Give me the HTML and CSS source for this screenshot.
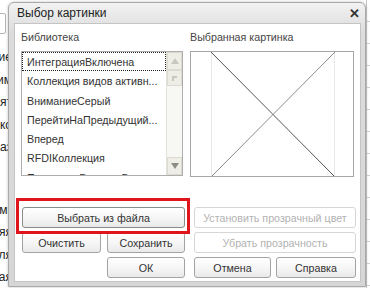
FILE: index.html
```html
<!DOCTYPE html>
<html>
    <head>
        <meta charset="utf-8">
        <title>Выбор картинки</title>
        <link rel="stylesheet" href="styles.css">
    </head>
    <body>
        <div class="desktop">
            <div class="bg-left">
                <div class="bg-field"></div>
                <div class="bg-line">Расширение</div>
                <div class="bg-line">Имя файла: им</div>
                <div class="bg-line">Используемят</div>
                <div class="bg-line">Описание ко</div>
                <div class="bg-line">Вид заказ</div>
                <div class="bg-line gap">Используемг</div>
                <div class="bg-line">Основнаяя</div>
                <div class="bg-line">Дополнителя</div>
                <div class="bg-line">Резервная</div>
            </div>
            <div class="bg-right"></div>

            <div class="dialog">
                <div class="dialog-title">
                    <span>Выбор картинки</span>
                    <span class="close">&#x2715;</span>
                </div>
                <div class="dialog-body">
                    <div class="columns">
                        <div class="col">
                            <div class="label">Библиотека</div>
                            <div class="list">
                                <ul class="items">
                                    <li class="focused">ИнтеграцияВключена</li>
                                    <li>Коллекция видов активн...</li>
                                    <li>ВниманиеСерый</li>
                                    <li>ПерейтиНаПредыдущий...</li>
                                    <li>Вперед</li>
                                    <li>RFDIКоллекция</li>
                                    <li>ПомощникБазовыхВерси</li>
                                </ul>
                                <div class="scrollbar">
                                    <div class="sb-btn"><span class="arrow up"></span></div>
                                    <div class="sb-thumb"><span class="grip"></span></div>
                                    <div class="sb-track"></div>
                                    <div class="sb-btn"><span class="arrow down"></span></div>
                                </div>
                            </div>
                        </div>
                        <div class="col">
                            <div class="label">Выбранная картинка</div>
                            <div class="picture">
                                <svg width="164" height="125" viewBox="0 0 164 125">
                                    <line x1="20.5" y1="0" x2="20.5" y2="125" stroke="#e8e8e8" stroke-width="1"/>
                                    <line x1="143.5" y1="0" x2="143.5" y2="125" stroke="#e8e8e8" stroke-width="1"/>
                                    <line x1="20" y1="0" x2="144" y2="125" stroke="#555" stroke-width="1"/>
                                    <line x1="144" y1="0" x2="20" y2="125" stroke="#8a8a8a" stroke-width="1"/>
                                </svg>
                            </div>
                        </div>
                    </div>

                    <div class="buttons">
                        <div class="btn-group left">
                            <button class="btn wide marked">Выбрать из файла</button>
                            <button class="btn">Очистить</button>
                            <button class="btn">Сохранить</button>
                            <span></span>
                            <button class="btn">ОК</button>
                        </div>
                        <div class="btn-group right">
                            <button class="btn wide" disabled>Установить прозрачный цвет</button>
                            <button class="btn wide" disabled>Убрать прозрачность</button>
                            <button class="btn">Отмена</button>
                            <button class="btn">Справка</button>
                        </div>
                    </div>
                </div>
            </div>
        </div>
    </body>
</html>
```

FILE: styles.css
```css
*{
    box-sizing: border-box;
}
body{
    margin: 0;
    font-family: "Liberation Sans", Arial, sans-serif;
    font-size: 10.7px;
    color: #333;
    background: #fff;
}
.desktop{
    position: relative;
    width: 370px;
    height: 288px;
    overflow: hidden;
}

/* what is behind the window */
.bg-left{
    width: 12px;
    height: 288px;
    overflow: hidden;
    padding-top: 13px;
}
.bg-field{
    width: 30px;
    height: 21px;
    margin-left: -24px;
    border: 1px solid #b5b5b5;
    border-radius: 2px;
    margin-bottom: 12px;
}
.bg-line{
    white-space: nowrap;
    font-size: 12px;
    line-height: 22.5px;
    direction: rtl;
    text-align: right;
    color: #222;
}
.bg-line.gap{
    margin-top: 40px;
}
.bg-right{
    position: absolute;
    right: 0;
    top: 0;
    width: 4px;
    height: 288px;
    border-left: 1px solid #c8c8c8;
    background: repeating-linear-gradient(#fff 0, #fff 21px, #d0d0d0 21px, #d0d0d0 22px);
}

/* window */
.dialog{
    position: absolute;
    left: 8px;
    top: 2px;
    width: 358px;
    height: 285px;
    padding: 0 4px 4px 5px;
    border: 1px solid #a9a9a9;
    border-radius: 6px 6px 0 0;
    background: linear-gradient(#f2f2f2, #dcdcdc 30px, #d6d6d6);
    box-shadow: 0 0 3px rgba(0,0,0,.25);
    display: flex;
    flex-direction: column;
}
.dialog-title{
    height: 20px;
    display: flex;
    align-items: center;
    justify-content: space-between;
    padding-left: 3px;
    padding-right: 1px;
    font-size: 12px;
    color: #222;
}
.close{
    font-size: 13px;
    font-weight: bold;
    color: #333;
}
.dialog-body{
    flex: 1;
    background: #fff;
    border: 1px solid #c4c4c4;
    padding: 6px 6px 0 6px;
}
.columns{
    display: flex;
    gap: 7px;
}
.col{
    width: 164px;
}
.label{
    height: 15px;
    line-height: 14px;
    margin-bottom: 6px;
    color: #444;
}

.list{
    display: flex;
    height: 125px;
    border: 1px solid #adadad;
}
.items{
    flex: 1;
    margin: 0;
    padding: 0;
    list-style: none;
    overflow: hidden;
}
.items li{
    height: 19.3px;
    line-height: 18px;
    padding-left: 4px;
    white-space: nowrap;
    border: 1px solid transparent;
}
.items li.focused{
    border: 1px dotted #222;
}
.scrollbar{
    width: 16px;
    display: flex;
    flex-direction: column;
    background: #f7f7f3;
    border-left: 1px solid #e2e1da;
}
.sb-btn, .sb-thumb{
    height: 18px;
    display: flex;
    align-items: center;
    justify-content: center;
    background: #efeee6;
    border: 1px solid #dddbd0;
}
.sb-thumb{
    height: 16px;
}
.grip{
    width: 5px;
    height: 5px;
    border-left: 2px solid #c9c8bd;
    border-top: 2px solid #c9c8bd;
}
.sb-track{
    flex: 1;
}
.arrow{
    width: 0;
    height: 0;
    border-left: 4px solid transparent;
    border-right: 4px solid transparent;
}
.arrow.up{
    border-bottom: 6px solid #c8c7bd;
}
.arrow.down{
    border-top: 6px solid #8e8d85;
}

.picture{
    height: 126px;
    border: 1px solid #a6a6a6;
    overflow: hidden;
}
.picture svg{
    display: block;
}

/* buttons */
.buttons{
    display: flex;
    gap: 9px;
    margin-top: 30px;
    padding-left: 1px;
}
.btn-group{
    display: grid;
    grid-auto-rows: 21px;
    row-gap: 4px;
}
.btn-group.left{
    width: 163px;
    grid-template-columns: 79px 78px;
    column-gap: 6px;
}
.btn-group.right{
    width: 162px;
    grid-template-columns: 77px 80px;
    column-gap: 5px;
}
.btn.wide{
    grid-column: 1 / 3;
}
.btn{
    font-family: inherit;
    font-size: 10.7px;
    white-space: nowrap;
    color: #333;
    padding: 0;
    border: 1px solid #a3a3a3;
    border-radius: 3px;
    background: linear-gradient(#fff, #f4f4f4 60%, #e9e9e9);
}
.btn:disabled{
    color: #b2b2b2;
    border-color: #d6d6d6;
    background: #fff;
}
.btn.marked{
    position: relative;
    border-color: #8a8a8a;
}
.btn.marked::after{
    content: "";
    position: absolute;
    left: -7px;
    right: -6px;
    top: -10px;
    bottom: -7px;
    border: 3px solid #e0141b;
}
```
